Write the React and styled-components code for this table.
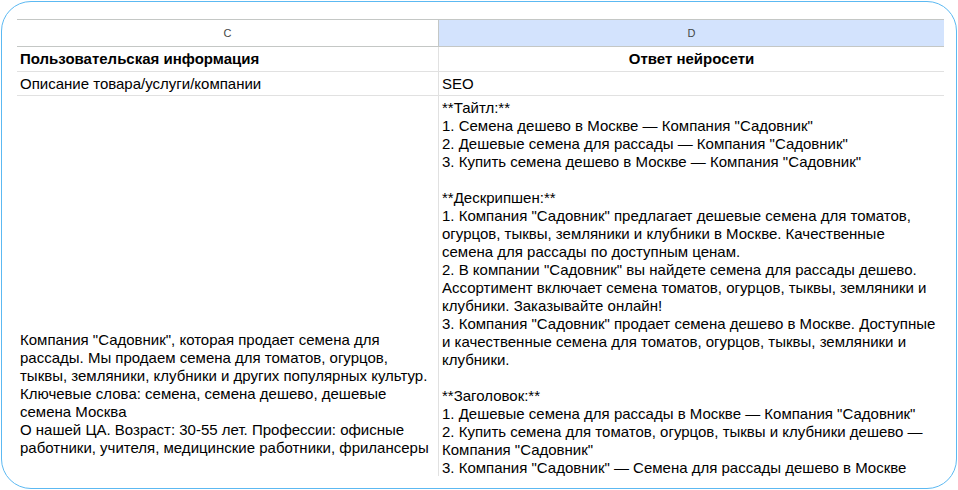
import React from "react";
import styled, { createGlobalStyle } from "styled-components";

const userInfo = [
  'Компания "Садовник", которая продает семена для',
  "рассады. Мы продаем семена для томатов, огурцов,",
  "тыквы, земляники, клубники и других популярных культур.",
  "Ключевые слова: семена, семена дешево, дешевые",
  "семена Москва",
  "О нашей ЦА. Возраст: 30-55 лет. Профессии: офисные",
  "работники, учителя, медицинские работники, фрилансеры",
  "",
];

const answer = [
  "**Тайтл:**",
  '1. Семена дешево в Москве — Компания "Садовник"',
  '2. Дешевые семена для рассады — Компания "Садовник"',
  '3. Купить семена дешево в Москве — Компания "Садовник"',
  "",
  "**Дескрипшен:**",
  '1. Компания "Садовник" предлагает дешевые семена для томатов,',
  "огурцов, тыквы, земляники и клубники в Москве. Качественные",
  "семена для рассады по доступным ценам.",
  '2. В компании "Садовник" вы найдете семена для рассады дешево.',
  "Ассортимент включает семена томатов, огурцов, тыквы, земляники и",
  "клубники. Заказывайте онлайн!",
  '3. Компания "Садовник" продает семена дешево в Москве. Доступные',
  "и качественные семена для томатов, огурцов, тыквы, земляники и",
  "клубники.",
  "",
  "**Заголовок:**",
  '1. Дешевые семена для рассады в Москве — Компания "Садовник"',
  '2. Купить семена для томатов, огурцов, тыквы и клубники дешево —',
  'Компания "Садовник"',
  '3. Компания "Садовник" — Семена для рассады дешево в Москве',
];

const GlobalStyle = createGlobalStyle`
  * { box-sizing: border-box; }
  body {
    margin: 0;
    background: #fff;
    font-family: "Liberation Sans", Arial, sans-serif;
    color: #000;
  }
`;

const Frame = styled.div`
  margin: 1px;
  width: 956px;
  height: 488px;
  border: 1px solid #5cb9f2;
  border-radius: 30px;
  padding: 17px 0 0 15px;
  overflow: hidden;
`;

const Sheet = styled.div`
  display: grid;
  grid-template-columns: 422px 505px;
  height: 457px;
  overflow: hidden;
  font-size: 15px;
  line-height: 18px;
`;

const HeaderCell = styled.div`
  height: 28px;
  display: flex;
  align-items: center;
  justify-content: center;
  font-size: 11px;
  color: #444746;
  border-top: 1px solid #c4c7c5;
  border-bottom: 1px solid #c4c7c5;
  border-right: ${(p) => (p.$last ? "none" : "1px solid #c4c7c5")};
  background: ${(p) => (p.$active ? "#d3e3fd" : "#fff")};
`;

const Cell = styled.div`
  height: ${(p) => (p.$h ? `${p.$h}px` : "auto")};
  padding: ${(p) => p.$pad || "0 3px"};
  display: flex;
  flex-direction: column;
  justify-content: ${(p) => p.$valign || "center"};
  align-items: ${(p) => (p.$center ? "center" : "flex-start")};
  font-weight: ${(p) => (p.$bold ? 700 : 400)};
  border-right: ${(p) => (p.$last ? "none" : "1px solid #e1e1e1")};
  border-bottom: ${(p) => (p.$open ? "none" : "1px solid #e1e1e1")};
  white-space: nowrap;
`;

const Line = styled.div`
  min-height: 18px;
`;

const Lines = ({ items }) =>
  items.map((text, i) => <Line key={i}>{text}</Line>);

export default function App() {
  return (
    <>
      <GlobalStyle />
      <Frame>
        <Sheet>
          <HeaderCell>C</HeaderCell>
          <HeaderCell $active $last>
            D
          </HeaderCell>

          <Cell $h={25} $bold>
            Пользовательская информация
          </Cell>
          <Cell $h={25} $bold $center $last>
            Ответ нейросети
          </Cell>

          <Cell $h={24} $valign="flex-end" $pad="0 3px 2px">
            Описание товара/услуги/компании
          </Cell>
          <Cell $h={24} $valign="flex-end" $pad="0 3px 2px" $last>
            SEO
          </Cell>

          <Cell $valign="flex-end" $pad="3px 3px 2px" $open>
            <Lines items={userInfo} />
          </Cell>
          <Cell $valign="flex-start" $pad="3px 3px 0" $open $last>
            <Lines items={answer} />
          </Cell>
        </Sheet>
      </Frame>
    </>
  );
}
